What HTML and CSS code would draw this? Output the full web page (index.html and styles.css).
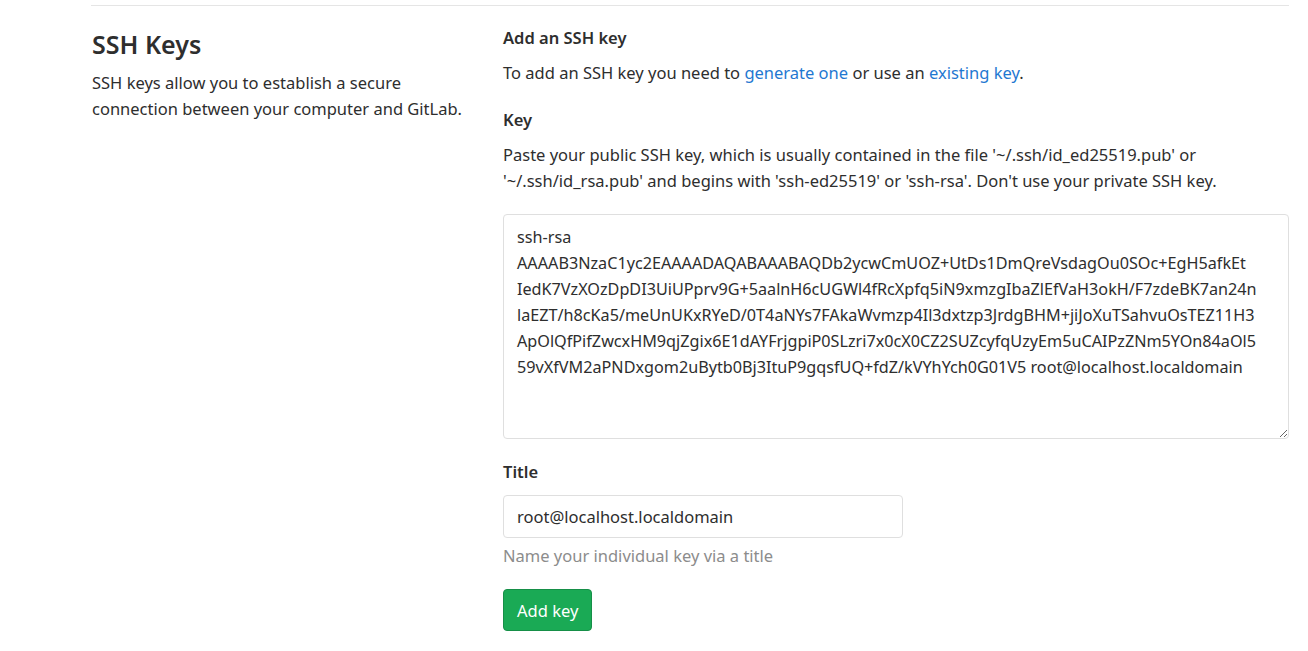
FILE: index.html
```html
<!DOCTYPE html>
<html>
<head>
<meta charset="utf-8">
<link rel="stylesheet" href="styles.css">
</head>
<body>
<div class="page">
  <section class="settings">
    <div class="intro">
      <h2 class="intro-title">SSH Keys</h2>
      <p class="intro-text">SSH keys allow you to establish a secure connection between your computer and GitLab.</p>
    </div>
    <form class="key-form">
      <h5 class="form-heading">Add an SSH key</h5>
      <p class="lead-text">To add an SSH key you need to <a href="#">generate one</a> or use an <a href="#">existing key</a>.</p>
      <label class="label" for="key">Key</label>
      <p class="help-block">Paste your public SSH key, which is usually contained in the file '~/.ssh/id_ed25519.pub' or '~/.ssh/id_rsa.pub' and begins with 'ssh-ed25519' or 'ssh-rsa'. Don't use your private SSH key.</p>
      <textarea id="key" class="textarea">ssh-rsa
AAAAB3NzaC1yc2EAAAADAQABAAABAQDb2ycwCmUOZ+UtDs1DmQreVsdagOu0SOc+EgH5afkEt
IedK7VzXOzDpDI3UiUPprv9G+5aalnH6cUGWl4fRcXpfq5iN9xmzgIbaZlEfVaH3okH/F7zdeBK7an24n
laEZT/h8cKa5/meUnUKxRYeD/0T4aNYs7FAkaWvmzp4Il3dxtzp3JrdgBHM+jiJoXuTSahvuOsTEZ11H3
ApOlQfPifZwcxHM9qjZgix6E1dAYFrjgpiP0SLzri7x0cX0CZ2SUZcyfqUzyEm5uCAIPzZNm5YOn84aOl5
59vXfVM2aPNDxgom2uBytb0Bj3ItuP9gqsfUQ+fdZ/kVYhYch0G01V5 root@localhost.localdomain</textarea>
      <label class="label title-label" for="title">Title</label>
      <input id="title" class="input" type="text" value="root@localhost.localdomain">
      <p class="input-help">Name your individual key via a title</p>
      <button type="button" class="btn-add">Add key</button>
    </form>
  </section>
</div>
</body>
</html>
```
FILE: styles.css
```css
html, body {
  margin: 0;
  padding: 0;
  background: #fff;
}
body {
  font-family: "Noto Sans", "Open Sans", sans-serif;
  font-size: 16.5px;
  color: #2e2e2e;
}
.page {
  padding: 5px 19px 0 91px;
}
.settings {
  border-top: 1px solid #e5e5e5;
  display: grid;
  grid-template-columns: 412px 1fr;
}
.intro {
  padding-left: 1px;
}
.intro-title {
  margin: 23px 0 0;
  font-size: 25px;
  font-weight: 600;
  line-height: 30px;
  color: #2e2e2e;
}
.intro-text {
  margin: 11px 0 0;
  max-width: 372px;
  font-size: 16.5px;
  line-height: 26px;
  color: #2e2e2e;
}
.key-form {
  display: flex;
  flex-direction: column;
  align-items: flex-start;
  padding-top: 19px;
}
.form-heading {
  margin: 0;
  font-size: 16.5px;
  font-weight: 600;
  line-height: 26px;
}
.lead-text {
  margin: 9px 0 0;
  line-height: 26px;
}
a {
  color: #1f78d1;
  text-decoration: none;
}
.label {
  margin-top: 21px;
  font-weight: 600;
  line-height: 26px;
}
.help-block {
  margin: 9px 0 0;
  line-height: 26px;
}
.textarea {
  margin-top: 20px;
  box-sizing: border-box;
  width: 786px;
  height: 225px;
  padding: 9px 13px;
  border: 1px solid #dfdfdf;
  border-radius: 4px;
  font-family: "Noto Sans", "Open Sans", sans-serif;
  font-size: 16.2px;
  line-height: 26px;
  color: #2e2e2e;
  white-space: pre-wrap;
  resize: vertical;
  overflow: hidden;
}
.title-label {
  margin-top: 20px;
}
.input {
  margin-top: 10px;
  box-sizing: border-box;
  width: 400px;
  height: 43px;
  padding: 0 13px;
  border: 1px solid #dfdfdf;
  border-radius: 4px;
  font-family: "Noto Sans", "Open Sans", sans-serif;
  font-size: 16.5px;
  color: #2e2e2e;
}
.input-help {
  margin: 5px 0 0;
  line-height: 26px;
  color: #8c8c8c;
}
.btn-add {
  margin-top: 20px;
  height: 42px;
  padding: 0 13px;
  background: #1aaa55;
  border: 1px solid #168f48;
  border-radius: 4px;
  color: #fff;
  font-family: "Noto Sans", "Open Sans", sans-serif;
  font-size: 16.5px;
}
```
